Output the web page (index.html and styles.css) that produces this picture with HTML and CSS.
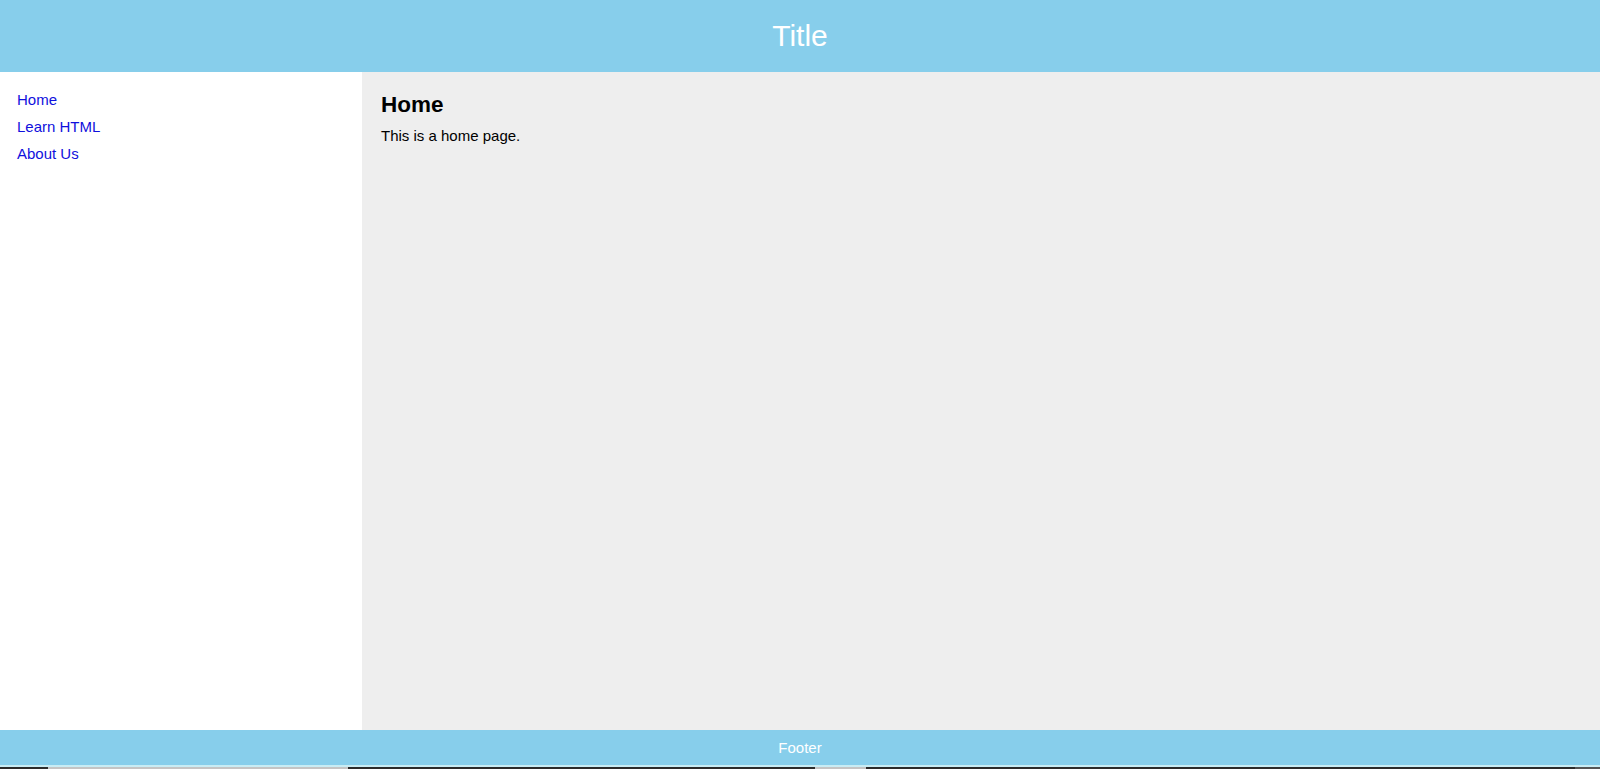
FILE: index.html
```html
<!DOCTYPE html>
<html lang="en">
<head>
<meta charset="utf-8">
<title>Title</title>
<link rel="stylesheet" href="styles.css">
</head>
<body>
<div class="page">
  <header class="header"><h1 class="title">Title</h1></header>
  <div class="middle">
    <nav class="sidebar">
      <ul class="nav-list">
        <li><a class="nav-link" href="#">Home</a></li>
        <li><a class="nav-link" href="#">Learn HTML</a></li>
        <li><a class="nav-link" href="#">About Us</a></li>
      </ul>
    </nav>
    <main class="content">
      <h2 class="content-title">Home</h2>
      <p class="content-text">This is a home page.</p>
    </main>
  </div>
  <footer class="footer">Footer</footer>
  <div class="edge"></div>
  <div class="strip">
    <span class="seg dark w48"></span>
    <span class="seg gray w300"></span>
    <span class="seg dark w467"></span>
    <span class="seg gray w51"></span>
    <span class="seg dark grow"></span>
    <span class="seg mid w25"></span>
  </div>
</div>
</body>
</html>
```
FILE: styles.css
```css
html, body {
  margin: 0;
  padding: 0;
  height: 100%;
}
body {
  font-family: "Liberation Sans", Arial, sans-serif;
  font-size: 15px;
  color: #000;
  background: #fff;
}
.page {
  display: flex;
  flex-direction: column;
  height: 100vh;
}
.header {
  height: 72px;
  flex: none;
  background: #87ceeb;
  display: flex;
  align-items: center;
  justify-content: center;
}
.title {
  margin: 0;
  font-size: 30px;
  font-weight: normal;
  color: #fff;
}
.middle {
  flex: 1;
  display: flex;
  min-height: 0;
}
.sidebar {
  width: 362px;
  flex: none;
  background: #fff;
}
.nav-list {
  list-style: none;
  margin: 0;
  padding: 19px 17px;
}
.nav-list li {
  margin-bottom: 10px;
}
.nav-link {
  color: #1010dd;
  text-decoration: none;
}
.content {
  flex: 1;
  background: #eeeeee;
  padding: 20px 19px;
}
.content-title {
  margin: 0;
  font-size: 22.5px;
  font-weight: bold;
}
.content-text {
  margin: 9px 0 0;
}
.footer {
  height: 35px;
  flex: none;
  background: #87ceeb;
  color: #fff;
  text-align: center;
  line-height: 35px;
}
.edge {
  height: 2px;
  flex: none;
  background: #c8ecf4;
}
.strip {
  height: 2px;
  flex: none;
  display: flex;
}
.seg { display: block; height: 100%; }
.dark { background: #2b2b2b; }
.gray { background: #c4c4c4; }
.mid { background: #555; }
.w48 { width: 48px; }
.w300 { width: 300px; }
.w467 { width: 467px; }
.w51 { width: 51px; }
.w25 { width: 25px; }
.grow { flex: 1; }
```
